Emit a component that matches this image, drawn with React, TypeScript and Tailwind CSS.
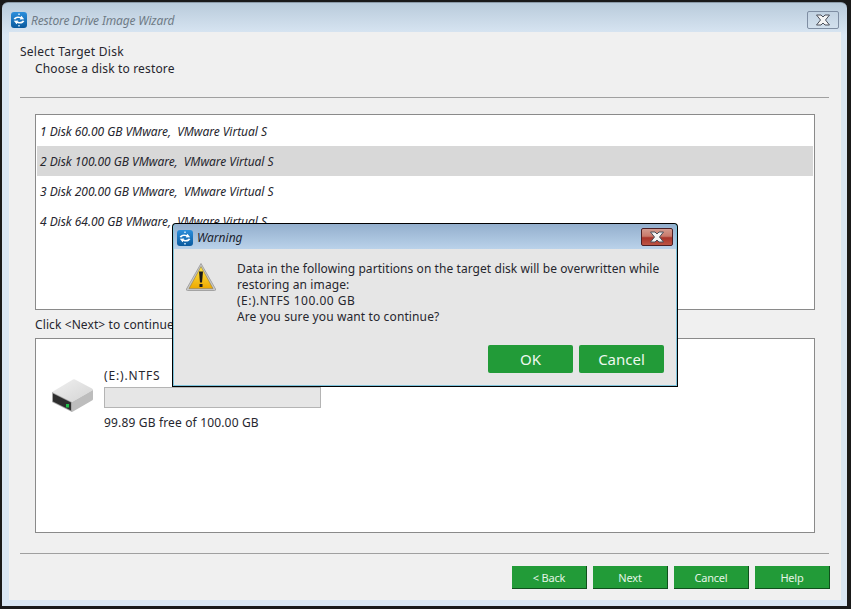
import React from 'react';

const font = { fontFamily: '"Noto Sans", "Liberation Sans", sans-serif' };

const AppIcon: React.FC<{ id: string }> = ({ id }) => (
    <svg width="16" height="16" viewBox="0 0 16 16" className="shrink-0">
        <defs>
            <linearGradient id={id} x1="0" y1="0" x2="0" y2="1">
                <stop offset="0" stopColor="#2c8fdc" />
                <stop offset="1" stopColor="#0a5a9e" />
            </linearGradient>
        </defs>
        <rect x="0" y="0" width="16" height="16" rx="3" fill={`url(#${id})`} />
        <path d="M2.6 7 C3.6 4.6 7 3.8 9.6 5 L10.4 3.8 L13.2 7.2 L8.8 7.4 L9.4 6.4 C7.4 5.6 5.4 5.9 4.4 7.4 Z" fill="#ffffff" />
        <path d="M13.4 9 C12.4 11.4 9 12.2 6.4 11 L5.6 12.2 L2.8 8.8 L7.2 8.6 L6.6 9.6 C8.6 10.4 10.6 10.1 11.6 8.6 Z" fill="#ffffff" />
        <rect x="7" y="1.6" width="2" height="1.2" fill="#cfe6f8" />
        <rect x="7" y="13.2" width="2" height="1.2" fill="#cfe6f8" />
    </svg>
);

const CloseGlyph: React.FC = () => (
    <svg width="18" height="12" viewBox="0 0 18 12">
        <path d="M2.5 1 L7 1 L9 3 L11 1 L15.5 1 L11.5 6 L15.5 11 L11 11 L9 9 L7 11 L2.5 11 L6.5 6 Z" fill="#f4f4f4" stroke="#4a4f5a" strokeWidth="1" strokeLinejoin="round" />
    </svg>
);

const WarningIcon: React.FC = () => (
    <svg width="32" height="30" viewBox="0 0 32 30">
        <defs>
            <linearGradient id="warnFill" x1="0" y1="0" x2="0" y2="1">
                <stop offset="0" stopColor="#ffe84a" />
                <stop offset="1" stopColor="#eda800" />
            </linearGradient>
        </defs>
        <path d="M16 1.5 L30.5 27 Q31 28.5 29.5 28.5 L2.5 28.5 Q1 28.5 1.5 27 Z" fill="#c9c9c9" stroke="#a3a3a3" strokeWidth="1" />
        <path d="M16 4.5 L28 26.6 L4 26.6 Z" fill="url(#warnFill)" stroke="#8a7a50" strokeWidth="0.6" />
        <path d="M14 9.5 L18 9.5 L17 20.5 L15 20.5 Z" fill="#1a1a1a" />
        <rect x="14.5" y="22" width="3" height="3" fill="#1a1a1a" />
    </svg>
);

const DriveIcon: React.FC = () => (
    <svg width="44" height="34" viewBox="0 0 44 34">
        <defs>
            <linearGradient id="driveTop" x1="0" y1="0" x2="1" y2="1">
                <stop offset="0" stopColor="#f0f0f0" />
                <stop offset="1" stopColor="#d4d4d4" />
            </linearGradient>
        </defs>
        <path d="M1 13 L22 0.5 Q23 0 24 0.5 L41 9.5 Q42 10 42 11 L21 23 Z" fill="url(#driveTop)" />
        <path d="M21 23 L42 11 L42 20 Q42 21 41 21.5 L22 32.5 L21 33 Z" fill="#bdbdbd" />
        <path d="M1 13 L21 23 L21 33 L1 23 Z" fill="#a6a6a6" />
        <path d="M2 14.5 L20 23.5 L20 31.5 L2 22.5 Z" fill="#2e2e2e" />
        <rect x="15" y="25" width="3" height="3.5" fill="#1fbf4a" />
    </svg>
);

const disks = [
    { label: '1 Disk 60.00 GB VMware,  VMware Virtual S' },
    { label: '2 Disk 100.00 GB VMware,  VMware Virtual S', selected: true },
    { label: '3 Disk 200.00 GB VMware,  VMware Virtual S' },
    { label: '4 Disk 64.00 GB VMware,  VMware Virtual S' },
];

const FooterButton: React.FC<{ label: string }> = ({ label }) => (
    <button className="w-[75px] h-[23px] bg-[#229b38] border-r border-b border-r-[#0f4f1c] border-b-[#0f4f1c] text-[11px] tracking-[-0.2px] text-[#e4f5e6] leading-none">
        {label}
    </button>
);

const App: React.FC = () => {
    return (
        <div className="relative w-[851px] h-[609px] bg-[#1a1a1a] overflow-hidden text-[12px] text-[#26262e]" style={font}>
            {/* main window */}
            <div className="ml-[2px] mt-[2px] w-[845px] h-[604px] rounded-t-[6px] bg-[linear-gradient(180deg,#b9cbdb_0px,#d9e6f3_32px)] border-t border-[#8b9aa8] flex flex-col">
                <div className="h-[29px] flex items-start pl-[9px] pr-[8px] pt-[9px] shrink-0">
                    <AppIcon id="appIconMain" />
                    <span className="ml-[4px] mt-[1px] text-[12px] leading-[16px] tracking-[-0.15px] italic text-[#6f7b86]">Restore Drive Image Wizard</span>
                    <div className="ml-auto w-[32px] h-[18px] -mt-[1px] border border-[#7f8ea3] rounded-[2px] flex items-center justify-center">
                        <CloseGlyph />
                    </div>
                </div>
                <div className="ml-[7px] w-[832px] h-[568px] bg-[#f0f0f0] flex flex-col">
                    <div className="pl-[11px] pt-[11px] leading-[17px]">
                        <div className="tracking-[0.25px]">Select Target Disk</div>
                        <div className="pl-[15px] tracking-[0.16px]">Choose a disk to restore</div>
                    </div>
                    <div className="ml-[11px] mr-[12px] mt-[20px] h-px bg-[#a0a0a0]" />
                    <div className="ml-[26px] w-[780px] h-[196px] mt-[16px] bg-white border border-[#8a8a8a] p-px">
                        {disks.map((d) => (
                            <div key={d.label} className={`h-[30px] flex items-center pt-[2px] pl-[3px] italic whitespace-pre tracking-[-0.04px] ${d.selected ? 'bg-[#d8d8d8]' : ''}`}>
                                {d.label}
                            </div>
                        ))}
                    </div>
                    <div className="ml-[26px] mt-[6px] h-[17px] leading-[17px] tracking-[0.1px]">Click &lt;Next&gt; to continue</div>
                    <div className="ml-[26px] w-[780px] h-[195px] mt-[5px] bg-white border border-[#8a8a8a] flex items-start">
                        <div className="ml-[15px] mt-[40px]"><DriveIcon /></div>
                        <div className="ml-[9px] mt-[28px]">
                            <div className="leading-[17px] tracking-[0.85px]">(E:).NTFS</div>
                            <div className="w-[217px] h-[21px] mt-[3px] bg-[#e6e6e6] border border-[#b4b4b4]" />
                            <div className="mt-[6px] leading-[17px] tracking-[0.16px]">99.89 GB free of 100.00 GB</div>
                        </div>
                    </div>
                    <div className="ml-[11px] mr-[12px] mt-[20px] h-px bg-[#a0a0a0]" />
                    <div className="mt-[12px] ml-[503px] flex gap-[6px]">
                        <FooterButton label="< Back" />
                        <FooterButton label="Next" />
                        <FooterButton label="Cancel" />
                        <FooterButton label="Help" />
                    </div>
                </div>
            </div>

            {/* warning dialog */}
            <div className="absolute left-[172px] top-[223px] w-[506px] h-[164px] bg-black rounded-t-[4px] p-px">
                <div className="w-full h-full rounded-t-[3px] bg-[#7fc4dc] pr-px pb-px pl-px flex flex-col">
                    <div className="h-[25px] shrink-0 bg-[linear-gradient(180deg,#93afcd,#bad2ea)] rounded-t-[3px] flex items-start pl-[3px] pr-[3px] pt-[6px]">
                        <AppIcon id="appIconDialog" />
                        <span className="ml-[4px] italic text-[12px] leading-[16px] text-[#1c2430]">Warning</span>
                        <div className="ml-auto w-[32px] h-[18px] -mt-[2px] rounded-[2px] border border-[#4d1f24] bg-[linear-gradient(180deg,#d39a8e_0%,#c97a6b_45%,#a8342a_55%,#bd5444_100%)] flex items-center justify-center">
                            <CloseGlyph />
                        </div>
                    </div>
                    <div className="flex-1 bg-[#e6e6e6] flex flex-col">
                        <div className="flex">
                            <div className="ml-[11px] mt-[13px]"><WarningIcon /></div>
                            <div className="ml-[20px] mt-[12px] leading-[16px] whitespace-pre">
                                <div className="tracking-[0.065px]">Data in the following partitions on the target disk will be overwritten while</div>
                                <div className="tracking-[0.1px]">restoring an image:</div>
                                <div className="tracking-[0.47px]">(E:).NTFS 100.00 GB</div>
                                <div className="tracking-[0.12px]">Are you sure you want to continue?</div>
                            </div>
                        </div>
                        <div className="mt-[20px] ml-[314px] flex gap-[6px]">
                            <button className="w-[85px] h-[28px] rounded-[2px] bg-[#229b38] text-[#eef8ef] text-[15px] leading-none">OK</button>
                            <button className="w-[85px] h-[28px] rounded-[2px] bg-[#229b38] text-[#eef8ef] text-[15px] leading-none">Cancel</button>
                        </div>
                    </div>
                </div>
            </div>
        </div>
    );
};

export default App;
